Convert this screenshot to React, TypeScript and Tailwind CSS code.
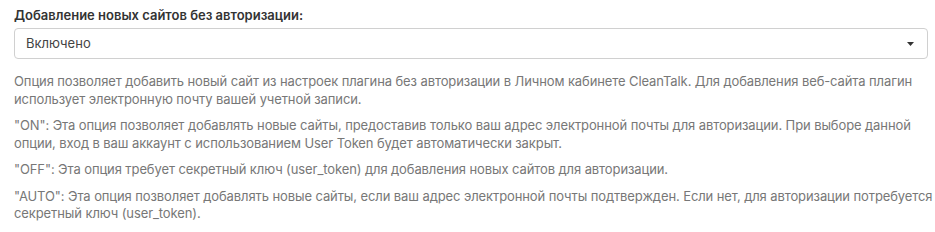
export default function App() {
  const font = { fontFamily: "Inter, 'Noto Sans', sans-serif" };

  return (
    <div className="bg-white w-[935px] h-[232px] px-[14px] pt-[7px]" style={font}>
      {/* Label */}
      <label className="block text-[13px] leading-[17px] font-semibold text-[#333]">
        Добавление новых сайтов без авторизации:
      </label>

      {/* Select */}
      <div className="mt-[4px] w-[914px] h-[31px] border border-[#d0d0d0] rounded-[4px] flex items-center justify-between pl-[11px] pr-[13px]">
        <span className="text-[13px] text-[#444]">Включено</span>
        <svg width="7" height="4" viewBox="0 0 7 4">
          <path d="M0 0 L7 0 L3.5 4 Z" fill="#333" />
        </svg>
      </div>

      {/* Description */}
      <div className="mt-[14px] w-[921px] text-[13px] leading-[17.5px] tracking-[-0.1px] text-[#777] whitespace-nowrap space-y-[9px]">
        <p>
          Опция позволяет добавить новый сайт из настроек плагина без авторизации в Личном кабинете CleanTalk. Для
          добавления веб-сайта плагин
          <br />
          использует электронную почту вашей учетной записи.
        </p>
        <p>
          "ON": Эта опция позволяет добавлять новые сайты, предоставив только ваш адрес электронной почты для
          авторизации. При выборе данной
          <br />
          опции, вход в ваш аккаунт с использованием User Token будет автоматически закрыт.
        </p>
        <p>"OFF": Эта опция требует секретный ключ (user_token) для добавления новых сайтов для авторизации.</p>
        <p>
          "AUTO": Эта опция позволяет добавлять новые сайты, если ваш адрес электронной почты подтвержден. Если нет,
          для авторизации потребуется
          <br />
          секретный ключ (user_token).
        </p>
      </div>
    </div>
  );
}
